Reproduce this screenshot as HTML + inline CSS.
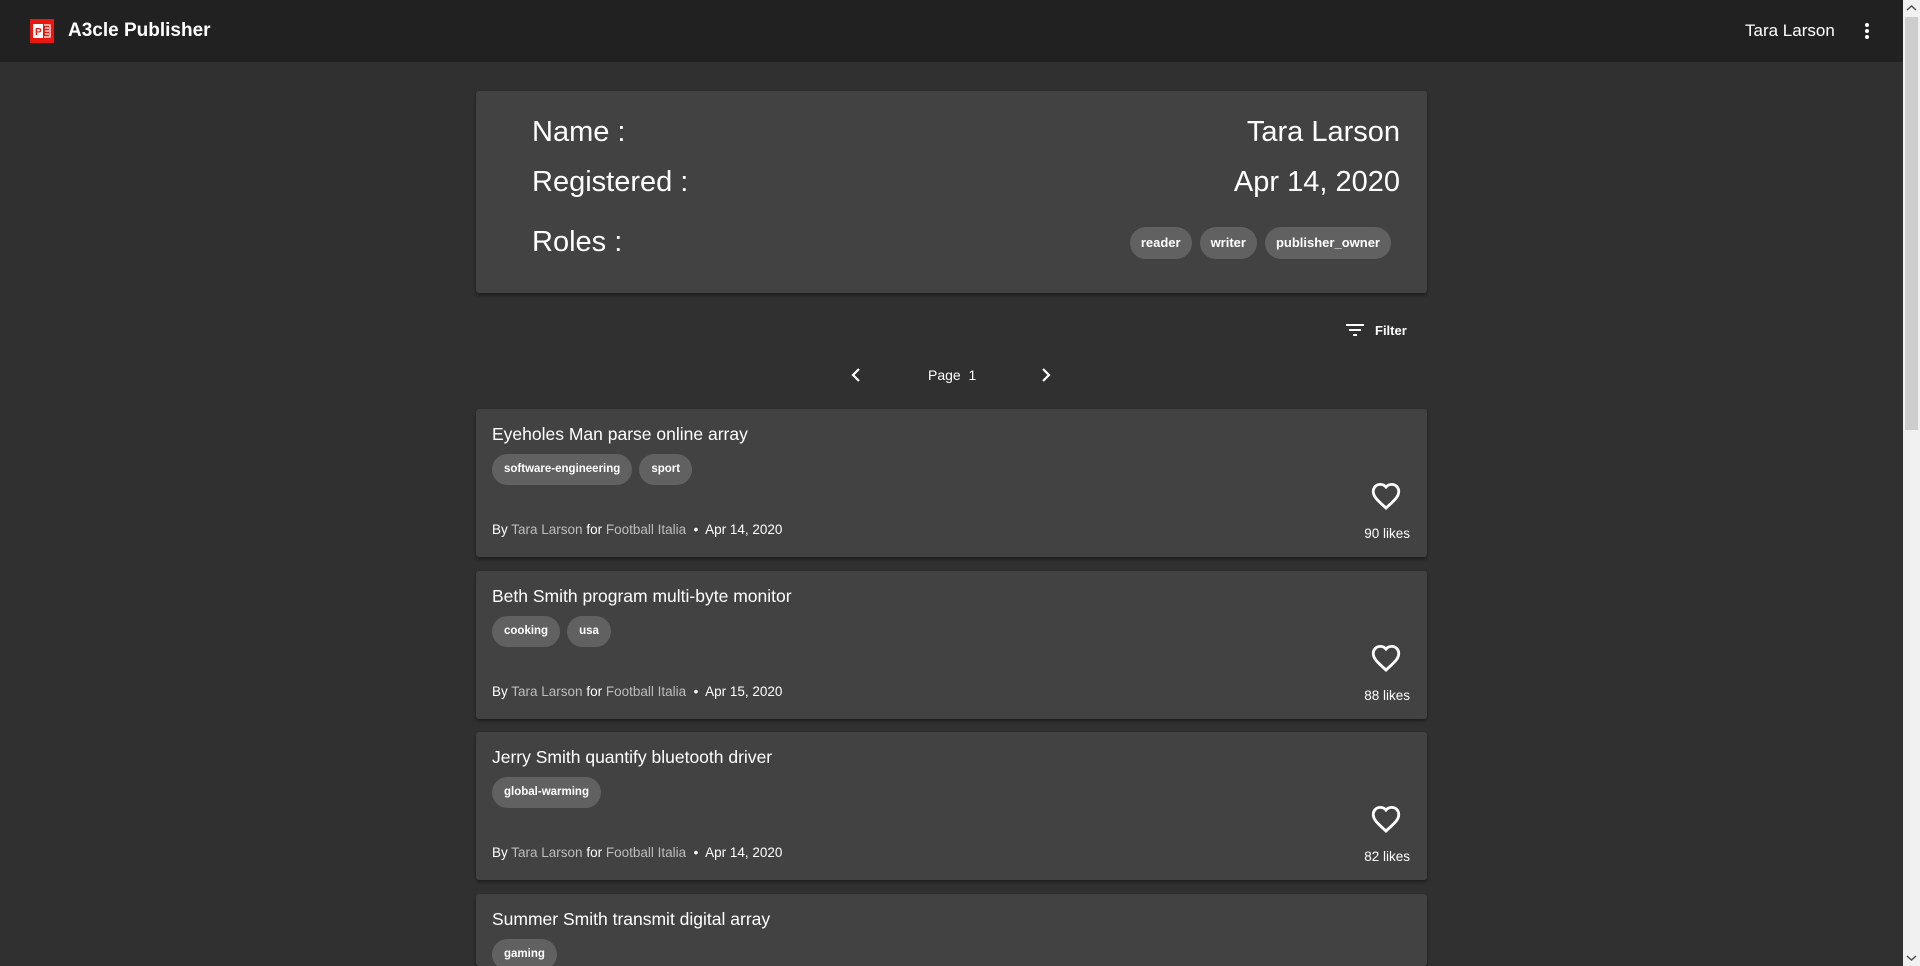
<!DOCTYPE html>
<html><head><meta charset="utf-8"><style>
*{box-sizing:border-box;margin:0;padding:0}
html,body{width:1920px;height:966px;overflow:hidden;background:#303030;font-family:"Liberation Sans",sans-serif;color:#fff}
.wrap{position:relative;width:1920px;height:966px;overflow:hidden}
.hdr{position:absolute;left:0;top:0;width:1903px;height:62px;background:#212121}
.logo{position:absolute;left:30px;top:19px;width:24px;height:24px;background:#e8170f}
.title{position:absolute;left:68px;top:19px;font-size:19px;font-weight:bold;line-height:24px}
.user{position:absolute;left:1745px;top:20px;font-size:17px;line-height:22px}
.dots{position:absolute;left:1865px;top:23px;width:4px}
.dots i{display:block;width:4px;height:4px;border-radius:2px;background:#fff;margin-bottom:2px}
.sb{position:absolute;left:1903px;top:0;width:17px;height:966px;background:#f1f1f1}
.thumb{position:absolute;left:1905px;top:17px;width:13px;height:413px;background:#cdcdcd}
.prof{position:absolute;left:476px;top:91px;width:951px;height:202px;background:#424242;border-radius:3px;box-shadow:0 2px 3px rgba(0,0,0,.4)}
.lbl{position:absolute;left:56px;font-size:29px;line-height:36px}
.val{position:absolute;right:27px;font-size:29px;line-height:36px}
.chip{display:inline-block;height:32px;line-height:32px;padding:0 11px;border-radius:16px;background:#616161;font-size:13px;font-weight:bold}
.chips{position:absolute;right:36px;top:136px;display:flex;gap:8px}
.filter{position:absolute;left:1345px;top:322px;font-size:13px;font-weight:bold;line-height:18px}
.pg{position:absolute;top:366px;font-size:14px;line-height:18px}
.card{position:absolute;left:476px;width:951px;height:148px;background:#424242;border-radius:3px;box-shadow:0 2px 3px rgba(0,0,0,.4)}
.ct{position:absolute;left:16px;top:14px;font-size:17.5px;line-height:22px}
.cc{position:absolute;left:16px;top:45px;display:flex;gap:7px}
.cc span{height:31px;line-height:31px;padding:0 12px;border-radius:16px;background:#616161;font-size:11.5px;font-weight:bold}
.by{position:absolute;left:16px;top:112px;font-size:13.5px;line-height:18px}
.by .g{color:#bdbdbd}
.heart{position:absolute;left:892px;top:70px}
.likes{position:absolute;right:17px;top:116px;font-size:13.5px;line-height:18px}
</style></head><body><div class="wrap">
<div class="hdr">
 <div class="logo"><svg width="24" height="24" viewBox="0 0 24 24"><rect x="3" y="5" width="10" height="14" fill="#fff"/><text x="5" y="16" font-size="10" font-weight="bold" fill="#e8170f" font-family="Liberation Sans">P</text><path d="M14 6h6v12h-6M15 9h4M15 12h4M15 15h4" stroke="#fff" fill="none" stroke-width="1.2"/></svg></div>
 <div class="title">A3cle Publisher</div>
 <div class="user">Tara Larson</div>
 <div class="dots"><i></i><i></i><i></i></div>
</div>
<div class="sb"></div><div class="thumb"></div>
<svg style="position:absolute;left:1906px;top:4px" width="11" height="8"><path d="M1 6l4.5-4 4.5 4" stroke="#505050" stroke-width="1.5" fill="none"/></svg>
<svg style="position:absolute;left:1906px;top:954px" width="11" height="8"><path d="M1 2l4.5 4 4.5-4" stroke="#505050" stroke-width="1.5" fill="none"/></svg>

<div class="prof">
 <div class="lbl" style="top:23px">Name :</div>
 <div class="val" style="top:23px">Tara Larson</div>
 <div class="lbl" style="top:73px">Registered :</div>
 <div class="val" style="top:73px">Apr 14, 2020</div>
 <div class="lbl" style="top:133px">Roles :</div>
 <div class="chips"><span class="chip">reader</span><span class="chip">writer</span><span class="chip">publisher_owner</span></div>
</div>

<div class="filter"><svg width="20" height="14" style="vertical-align:-2px;margin-right:10px"><path d="M1 2h18M4 7h12M8 12h4" stroke="#fff" stroke-width="2"/></svg>Filter</div>
<svg style="position:absolute;left:850px;top:367px" width="12" height="16"><path d="M9 2L3 8l6 6" stroke="#fff" stroke-width="2.2" fill="none"/></svg>
<div class="pg" style="left:928px">Page&nbsp; 1</div>
<svg style="position:absolute;left:1040px;top:367px" width="12" height="16"><path d="M3 2l6 6-6 6" stroke="#fff" stroke-width="2.2" fill="none"/></svg>

<div class="card" style="top:409px">
 <div class="ct">Eyeholes Man parse online array</div>
 <div class="cc"><span>software-engineering</span><span>sport</span></div>
 <div class="by">By <span class="g">Tara Larson</span> for <span class="g">Football Italia</span> &nbsp;•&nbsp; Apr 14, 2020</div>
 <svg class="heart" width="36" height="34" viewBox="0 0 24 24"><path d="M12 20.5l-1.3-1.2C6 15.1 3 12.3 3 8.8 3 6 5.2 3.8 8 3.8c1.6 0 3 .7 4 1.9 1-1.2 2.4-1.9 4-1.9 2.8 0 5 2.2 5 5 0 3.5-3 6.3-7.7 10.5z" stroke="#fff" stroke-width="2" fill="none"/></svg>
 <div class="likes">90 likes</div>
</div>
<div class="card" style="top:571px">
 <div class="ct">Beth Smith program multi-byte monitor</div>
 <div class="cc"><span>cooking</span><span>usa</span></div>
 <div class="by">By <span class="g">Tara Larson</span> for <span class="g">Football Italia</span> &nbsp;•&nbsp; Apr 15, 2020</div>
 <svg class="heart" width="36" height="34" viewBox="0 0 24 24"><path d="M12 20.5l-1.3-1.2C6 15.1 3 12.3 3 8.8 3 6 5.2 3.8 8 3.8c1.6 0 3 .7 4 1.9 1-1.2 2.4-1.9 4-1.9 2.8 0 5 2.2 5 5 0 3.5-3 6.3-7.7 10.5z" stroke="#fff" stroke-width="2" fill="none"/></svg>
 <div class="likes">88 likes</div>
</div>
<div class="card" style="top:732px">
 <div class="ct">Jerry Smith quantify bluetooth driver</div>
 <div class="cc"><span>global-warming</span></div>
 <div class="by">By <span class="g">Tara Larson</span> for <span class="g">Football Italia</span> &nbsp;•&nbsp; Apr 14, 2020</div>
 <svg class="heart" width="36" height="34" viewBox="0 0 24 24"><path d="M12 20.5l-1.3-1.2C6 15.1 3 12.3 3 8.8 3 6 5.2 3.8 8 3.8c1.6 0 3 .7 4 1.9 1-1.2 2.4-1.9 4-1.9 2.8 0 5 2.2 5 5 0 3.5-3 6.3-7.7 10.5z" stroke="#fff" stroke-width="2" fill="none"/></svg>
 <div class="likes">82 likes</div>
</div>
<div class="card" style="top:894px;height:72px">
 <div class="ct">Summer Smith transmit digital array</div>
 <div class="cc"><span>gaming</span></div>
</div>
</div></body></html>
